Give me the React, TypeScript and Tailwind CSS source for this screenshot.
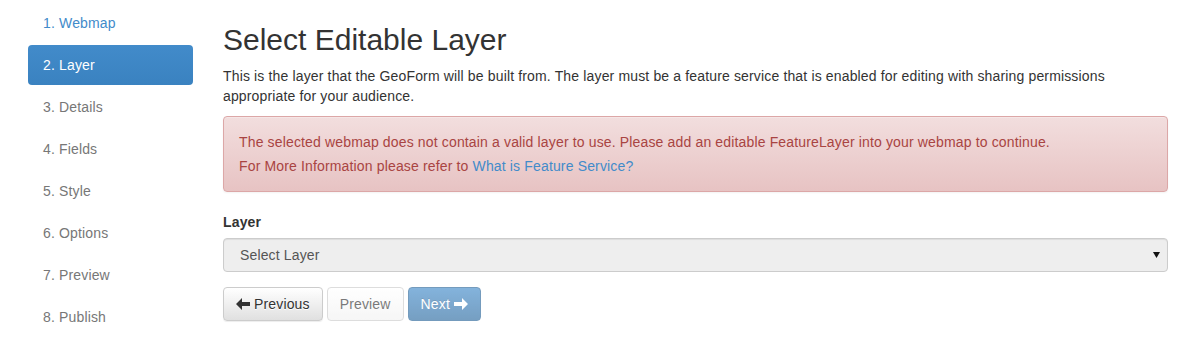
import React from 'react';

const steps = ['1. Webmap', '2. Layer', '3. Details', '4. Fields', '5. Style', '6. Options', '7. Preview', '8. Publish'];

const ArrowLeft = () => (
    <svg width="14" height="12" viewBox="0 0 14 12" className="inline-block align-[-1px]">
        <path d="M0 6 L6 0 L6 4 L14 4 L14 8 L6 8 L6 12 Z" fill="currentColor" />
    </svg>
);

const ArrowRight = () => (
    <svg width="14" height="12" viewBox="0 0 14 12" className="inline-block align-[-1px]">
        <path d="M14 6 L8 0 L8 4 L0 4 L0 8 L8 8 L8 12 Z" fill="currentColor" />
    </svg>
);

const App = () => {
    return (
        <div className="flex min-h-[356px] bg-white pt-[3px] text-[14px] leading-[20px] tracking-[0.15px] text-[#333]" style={{ fontFamily: '"Liberation Sans", Arial, sans-serif' }}>
            {/* step nav */}
            <ul className="ml-[28px] flex w-[165px] shrink-0 flex-col gap-[2px]">
                {steps.map((s, i) => (
                    <li
                        key={s}
                        className={`h-[40px] rounded-[4px] px-[15px] py-[10px] ${
                            i === 1
                                ? 'bg-gradient-to-b from-[#428bca] to-[#3a82c0] text-white'
                                : i === 0
                                ? 'text-[#428bca]'
                                : 'text-[#777]'
                        }`}
                    >
                        {s}
                    </li>
                ))}
            </ul>

            <div className="ml-[30px] w-[945px] shrink-0">
                <h2 className="mt-[20px] mb-[10px] text-[30px] leading-[33px] font-normal tracking-normal text-[#333]">Select Editable Layer</h2>
                <p className="mb-[10px]">
                    This is the layer that the GeoForm will be built from. The layer must be a feature service that is enabled for editing with sharing permissions appropriate for your audience.
                </p>

                <div className="mb-[20px] rounded-[4px] border border-[#dca7a7] bg-gradient-to-b from-[#f2dede] to-[#e7c3c3] p-[15px] text-[#a94442] shadow-[inset_0_1px_0_rgba(255,255,255,0.25),0_1px_2px_rgba(0,0,0,0.05)]">
                    <p>The selected webmap does not contain a valid layer to use. Please add an editable FeatureLayer into your webmap to continue.</p>
                    <p className="mt-[4px]">
                        For More Information please refer to <span className="text-[#428bca]">What is Feature Service?</span>
                    </p>
                </div>

                <label className="mb-[6px] block font-bold">Layer</label>
                <div className="flex h-[34px] items-center justify-between rounded-[4px] border border-[#ccc] bg-[#eee] pr-[7px] pl-[16px] text-[#555] shadow-[inset_0_1px_1px_rgba(0,0,0,0.075)]">
                    <span>Select Layer</span>
                    <svg width="7" height="6" viewBox="0 0 7 6">
                        <path d="M0 0 L7 0 L3.5 6 Z" fill="#111" />
                    </svg>
                </div>

                <div className="mt-[15px] flex gap-[4px]">
                    <button className="h-[34px] rounded-[4px] border border-[#ccc] bg-gradient-to-b from-white to-[#e0e0e0] px-[12px] text-[#333] shadow-[inset_0_1px_0_rgba(255,255,255,0.15),0_1px_1px_rgba(0,0,0,0.075)] [text-shadow:0_1px_0_#fff]">
                        <ArrowLeft /> Previous
                    </button>
                    <button className="h-[34px] rounded-[4px] border border-[#ccc] bg-[#e0e0e0] px-[12px] text-[#333] opacity-[0.65] [background:linear-gradient(#fff,#f2f2f2)]">
                        Preview
                    </button>
                    <button className="h-[34px] rounded-[4px] border border-[#2b669a] bg-gradient-to-b from-[#428bca] to-[#2d6ca2] px-[12px] text-white opacity-[0.65] [text-shadow:0_-1px_0_rgba(0,0,0,0.2)]">
                        Next <ArrowRight />
                    </button>
                </div>
            </div>
        </div>
    );
};

export default App;
